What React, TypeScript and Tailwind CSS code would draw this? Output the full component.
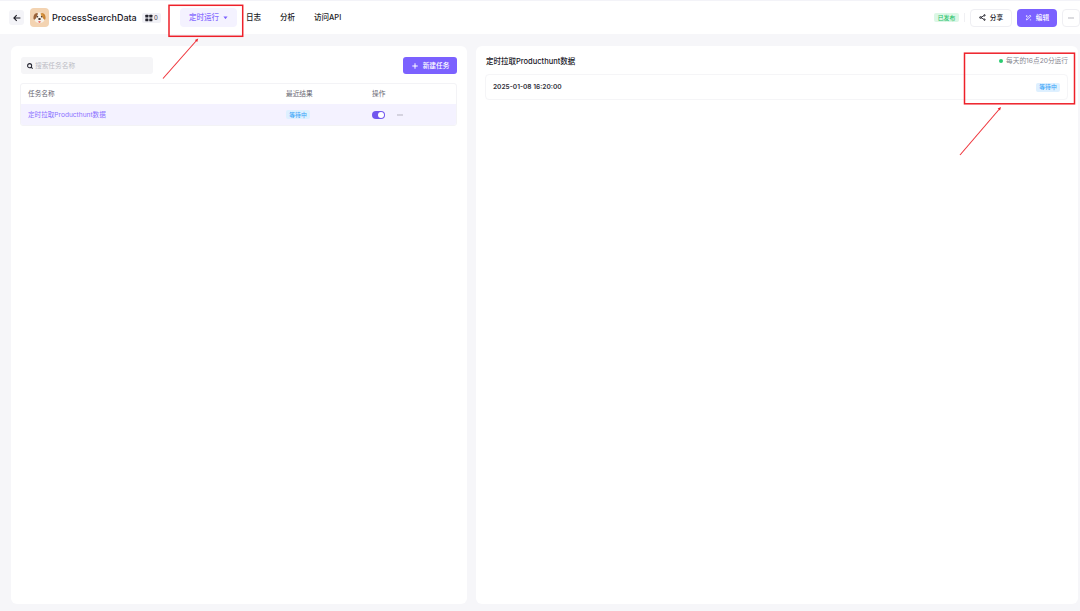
import { useState } from "react";
import type { ReactNode } from "react";
import { Plus } from "lucide-react";

const tabs = ["日志", "分析", "访问API"];

function Tag({ children }: { children: ReactNode }) {
  return (
    <span className="flex h-[9px] w-6 items-center justify-center rounded-[2px] bg-[#def0ff] text-[5.8px] font-medium text-[#3aa5f8]">
      {children}
    </span>
  );
}

function DogIcon() {
  return (
    <svg viewBox="0 0 20 20" className="size-[15px]">
      <path d="M5 5Q10 1.5 15 5L17 12Q16 17.5 10 17.5Q4 17.5 3 12Z" fill="#f7f1e8" />
      <path d="M7 4Q3 4 2 9Q1.5 13 3.5 13Q6 11 8 5Z" fill="#9a6238" />
      <path d="M13 4Q17 4 18 9Q18.5 13 16.5 13Q14 11 12 5Z" fill="#c98232" />
      <path d="M11.5 4Q15 4 15.5 9Q12 10 11.5 4Z" fill="#d69745" />
      <circle cx="7.3" cy="9" r="1" fill="#3a2b28" />
      <circle cx="12.8" cy="9" r="1" fill="#3a2b28" />
      <ellipse cx="10" cy="12" rx="1.8" ry="1.3" fill="#3a2b28" />
      <path d="M8.5 14.5H11.5V16Q10 18.5 8.5 16Z" fill="#e8706b" />
    </svg>
  );
}

function Header() {
  return (
    <header className="flex h-[34px] shrink-0 items-center border-t border-[#f3f3f8] bg-white pl-[9px]">
      <button className="flex size-[15px] items-center justify-center rounded-[3px] bg-[#f4f4f8]">
        <svg viewBox="0 0 8 8" className="size-2" fill="none" stroke="#1d1d26" strokeWidth="1.1">
          <path d="M7.4 4H1M3.7 1.2L.9 4L3.7 6.8" />
        </svg>
      </button>
      <div className="ml-1.5 flex size-[19px] items-center justify-center rounded-[4px] bg-[#f3d3b1]">
        <DogIcon />
      </div>
      <h1 className="ml-[3px] w-[90px] text-[9px] font-medium text-[#17171f]">ProcessSearchData</h1>
      <div className="flex h-2.5 w-[19px] items-center rounded-[2px] bg-[#f1f1f6] pl-[3px] text-[6px] text-[#333340]">
        <svg viewBox="0 0 8 8" className="mr-[1px] size-2 shrink-0" fill="#24242e">
          <rect x=".3" y=".7" width="3.1" height="2.9" rx=".6" />
          <rect x="4.3" y=".7" width="3.1" height="2.9" rx=".6" />
          <rect x=".3" y="4.4" width="3.1" height="2.9" rx=".6" />
          <rect x="4.3" y="4.4" width="3.1" height="2.9" rx=".6" />
        </svg>
        0
      </div>
      <nav className="ml-[19px] flex items-center text-[7.5px] font-medium text-[#1b1b24]">
        <button className="flex h-[19px] w-[57px] items-center rounded-[4px] bg-[#f4f2ff] pl-[9px] text-[#8a70ff]">
          定时运行
          <svg viewBox="0 0 6 4" className="ml-1 h-[3.5px] w-[5px]" fill="#7b61ff">
            <path d="M.5.4H5.5L3 3.7Z" />
          </svg>
        </button>
        <div className="ml-[9px] flex gap-[19px]">
          {tabs.map(t => <a key={t}>{t}</a>)}
        </div>
      </nav>
      <div className="ml-auto flex items-center">
        <span className="flex h-[9px] w-[25px] items-center justify-center rounded-[2px] bg-[#dcf7e6] text-[5.8px] font-medium text-[#28c26b]">已发布</span>
        <span className="ml-[5px] h-[9px] w-px bg-[#f0f0f3]" />
        <button className="ml-[5px] flex h-[18px] w-[42px] items-center justify-center gap-1 rounded-[4px] border border-[#efeff3] text-[6.7px] font-medium text-[#17171f]">
          <svg viewBox="0 0 8 8" className="size-[7px]" fill="none" stroke="#22222b" strokeWidth="1">
            <path d="M2 4L6 1.7M2 4L6 6.3" />
            <circle cx="1.7" cy="4" r="1" />
            <circle cx="6.3" cy="1.5" r=".8" />
            <circle cx="6.3" cy="6.5" r=".8" />
          </svg>
          <span className="pt-px">分享</span>
        </button>
        <button className="ml-[5px] flex h-[18px] w-10 items-center justify-center gap-1 rounded-[4px] bg-[#7b61ff] text-[6.7px] font-medium text-white">
          <svg viewBox="0 0 8 8" className="size-[7px]" fill="none" stroke="white" strokeWidth=".8">
            <path d="M1 2.4H2.8M1.9 1.5V3.3M1.5 6.8L2 5.2L5.7 1.3L6.8 2.4L3.2 6.2ZM5.6 6.7H7" />
          </svg>
          <span className="pt-px">编辑</span>
        </button>
        <button className="ml-[5px] flex h-[18px] w-[18px] items-center justify-center rounded-[4px] border border-[#efeff3]">
          <Dots />
        </button>
      </div>
    </header>
  );
}

function Dots() {
  return (
    <svg viewBox="0 0 6 2" className="h-0.5 w-1.5" fill="#9a9aa4">
      <circle cx="1" cy="1" r=".65" />
      <circle cx="3" cy="1" r=".65" />
      <circle cx="5" cy="1" r=".65" />
    </svg>
  );
}

function TaskList() {
  const [on, setOn] = useState(true);
  return (
    <section className="w-[456px] shrink-0 rounded-[6px] bg-white px-[9px] pt-[11px]">
      <div className="flex h-[17px] justify-between pr-px pl-px">
        <label className="flex w-[132px] items-center gap-[2px] rounded-[3px] bg-[#f5f5f7] pl-1.5">
          <svg viewBox="0 0 8 8" className="size-[6px] shrink-0" fill="none" stroke="#252530" strokeWidth="1.4">
            <circle cx="3.5" cy="3.5" r="2.7" />
            <path d="M5.5 5.5L7.5 7.5" />
          </svg>
          <input className="w-full text-[6.7px] outline-none placeholder:text-[#bcbcc4]" placeholder="搜索任务名称" />
        </label>
        <button className="flex w-[54px] items-center justify-center gap-1 rounded-[3px] bg-[#7b61ff] text-[6.7px] font-medium text-white">
          <Plus size={8} strokeWidth={3} />
          <span className="pt-px">新建任务</span>
        </button>
      </div>
      <div className="mt-[9px] mr-px h-[43px] overflow-hidden rounded-[3px] border border-[#f3f3f6] text-[6.7px]">
        <div className="grid h-5 grid-cols-[258px_86px_1fr] items-center pl-[7px] text-[#666671]">
          <span>任务名称</span>
          <span>最近结果</span>
          <span>操作</span>
        </div>
        <div className="grid h-[22px] grid-cols-[258px_86px_1fr] items-center border-b border-[#eae7f8] bg-[#f4f2ff] pl-[7px] text-[#8a70ff]">
          <span className="pt-px text-[6.6px]">定时拉取Producthunt数据</span>
          <Tag>等待中</Tag>
          <div className="flex items-center gap-3">
            <button
              onClick={() => setOn(!on)}
              className={on ? "flex h-2 w-[13px] items-center justify-end rounded-full bg-[#7056ee] p-px" : "flex h-2 w-[13px] items-center rounded-full bg-gray-300 p-px"}
            >
              <span className="size-[6px] rounded-full bg-white" />
            </button>
            <Dots />
          </div>
        </div>
      </div>
    </section>
  );
}

function RunHistory() {
  return (
    <section className="w-[602px] shrink-0 rounded-[6px] bg-white pt-[9px] pr-2.5 pl-[9px]">
      <div className="flex h-3 items-center justify-between pl-[1px]">
        <h2 className="pt-px text-[7.5px] font-medium text-[#17171f]">定时拉取Producthunt数据</h2>
        <div className="flex items-center gap-[3px] text-[6.7px] text-[#85858f]">
          <span className="size-1 rounded-full bg-[#2acb70]" />
          每天的16点20分运行
        </div>
      </div>
      <div className="mt-[7px] flex h-[26px] items-center justify-between rounded-[4px] border border-[#f5f5f7] pr-[7px] pl-[7px] text-[6.6px] font-semibold text-[#30303a]">
        2025-01-08 16:20:00
        <Tag>等待中</Tag>
      </div>
    </section>
  );
}

// red callouts drawn over the page
function Callouts() {
  return (
    <div className="pointer-events-none absolute inset-0">
      <svg viewBox="0 0 1080 611" className="absolute inset-0 size-full" stroke="#ef343b" fill="#ee2029">
        <rect x="169" y="5.3" width="73.7" height="31" fill="none" stroke="#ee2029" strokeWidth="1.5" />
        <rect x="964.5" y="53.2" width="110" height="50.6" fill="none" stroke="#ee2029" strokeWidth="1.5" />
        <path d="M163 78.5L196.5 40.5" strokeWidth="1.1" />
        <path d="M198.2 38.5L197.2 42L194.9 40Z" stroke="none" />
        <path d="M960 155L999 109.5" strokeWidth="1.1" />
        <path d="M1001 107L1000 110.5L997.7 108.5Z" stroke="none" />
      </svg>
    </div>
  );
}

export default function App() {
  return (
    <div className="relative flex h-[611px] w-[1080px] flex-col overflow-hidden bg-[#f6f6f9] font-['Inter','Noto_Sans_CJK_SC',sans-serif] leading-none">
      <Header />
      <main className="flex flex-1 gap-[9px] pt-3 pb-[7px] pl-[11px]">
        <TaskList />
        <RunHistory />
      </main>
      <Callouts />
    </div>
  );
}
